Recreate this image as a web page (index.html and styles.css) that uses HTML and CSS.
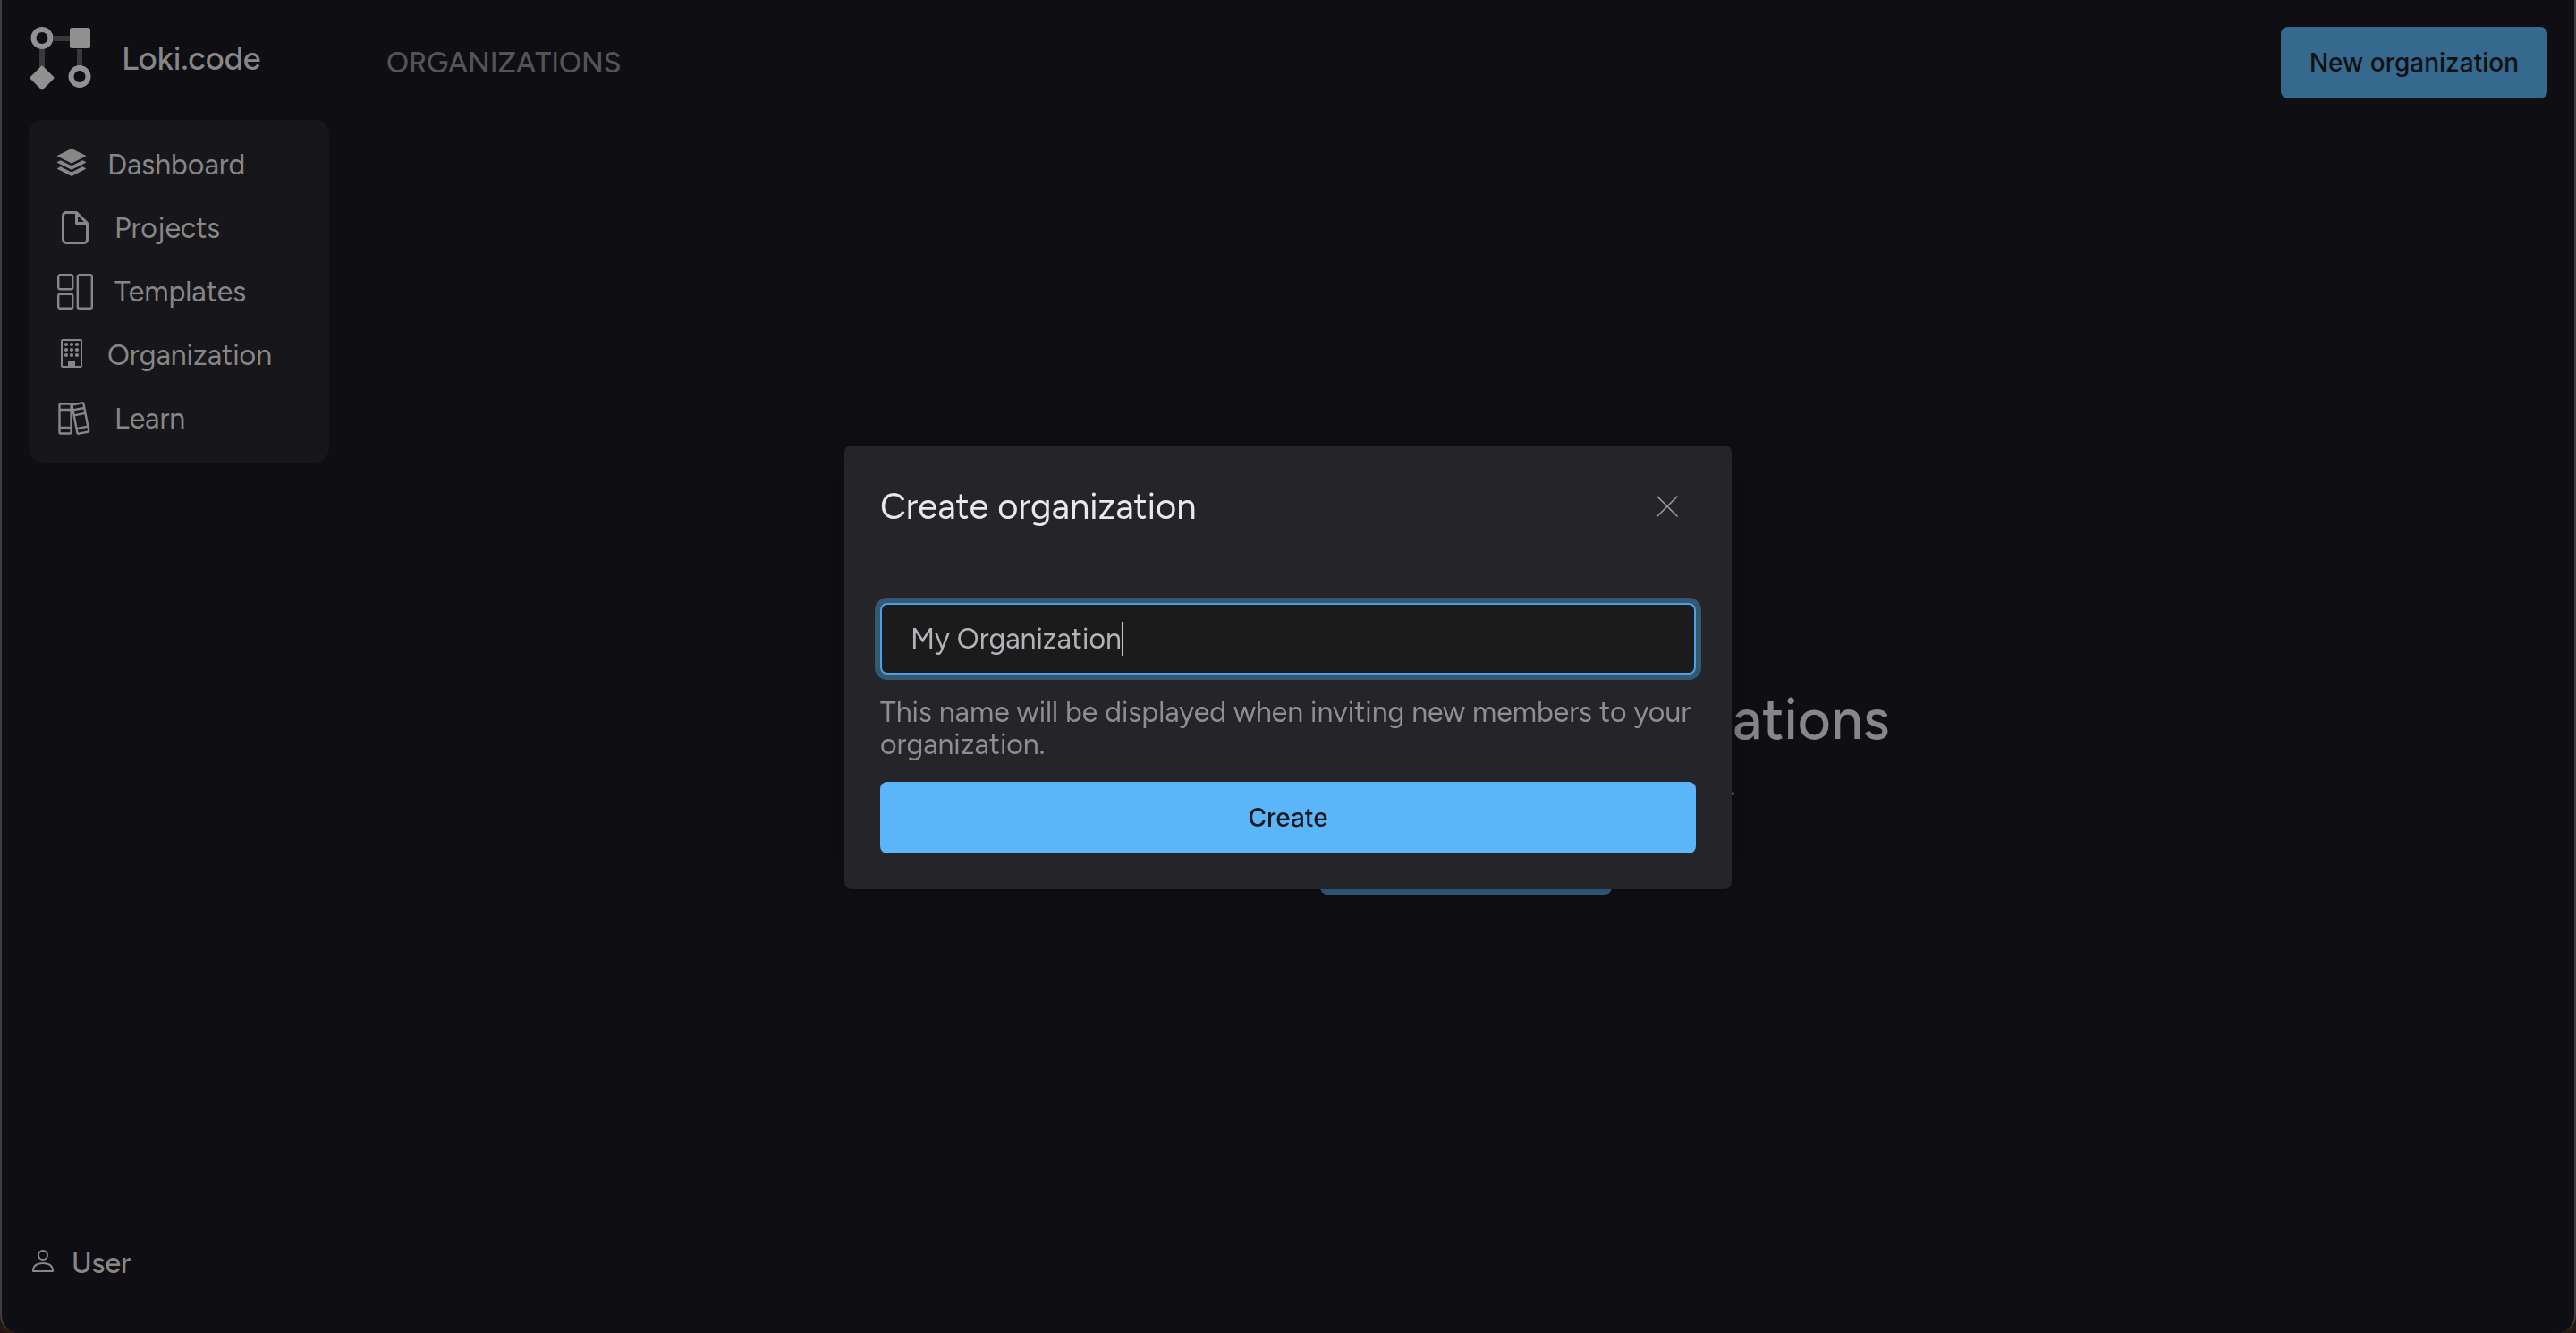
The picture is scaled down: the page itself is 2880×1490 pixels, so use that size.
FILE: index.html
```html
<!DOCTYPE html>
<html lang="en">
<head>
<meta charset="utf-8">
<meta name="viewport" content="width=device-width, initial-scale=1">
<title>Loki.code – Organizations</title>
<link rel="stylesheet" href="styles.css">
</head>
<body>
<div class="app">
  <aside class="sidebar">
    <a class="brand" href="#">
      <svg class="brand-logo" width="70" height="74" viewBox="0 0 70 74" aria-hidden="true">
        <path d="M15 25v20M28 13h20M57 25v20" fill="none" stroke="#39393b" stroke-width="6"/>
        <g fill="none" stroke="#919191" stroke-width="6"><circle cx="15" cy="12.500" r="9.500"/><circle cx="57" cy="55.500" r="9.500"/></g>
        <rect x="46" y="1" width="23" height="23" rx="2.500" fill="#919191"/>
        <path d="M15 45 27 57 15 69 3 57z" fill="#919191" stroke="#919191" stroke-width="3" stroke-linejoin="round"/>
      </svg>
      <span class="brand-name">Loki.code</span>
    </a>
    <nav class="menu">
      <a class="menu-item" href="#">
        <svg class="icon-small" width="32" height="32" viewBox="0 0 16 16" fill="currentColor" aria-hidden="true"><path d="m14.120 10.163 1.715.858c.22.110.220.424 0 .534L8.267 15.340a.6.6 0 0 1-.534 0L.165 11.555a.299.299 0 0 1 0-.534l1.716-.858 5.317 2.659c.505.252 1.100.252 1.604 0z"/><path d="m14.120 6.576 1.715.858c.22.110.220.424 0 .534l-7.568 3.784a.6.6 0 0 1-.534 0L.165 7.968a.299.299 0 0 1 0-.534l1.716-.858 5.317 2.659c.505.252 1.100.252 1.604 0z"/><path d="M7.733.063a.6.6 0 0 1 .534 0l7.568 3.784a.3.3 0 0 1 0 .535L8.267 8.165a.6.6 0 0 1-.534 0L.165 4.382a.299.299 0 0 1 0-.535z"/></svg>
        Dashboard
      </a>
      <a class="menu-item" href="#">
        <svg width="40" height="40" viewBox="0 0 40 40" fill="none" stroke="currentColor" stroke-width="3" stroke-linejoin="round" aria-hidden="true"><path d="M21.500 2.500H10a3.500 3.500 0 0 0-3.500 3.500v27a3.500 3.500 0 0 0 3.500 3.500h20a3.500 3.500 0 0 0 3.500-3.500V14.500zM21.500 2.500v12h12"/></svg>
        Projects
      </a>
      <a class="menu-item" href="#">
        <svg width="40" height="40" viewBox="0 0 40 40" fill="none" stroke="currentColor" stroke-width="2.400" aria-hidden="true"><rect x="1.200" y="1.200" width="16" height="16" rx="2"/><rect x="1.200" y="22.800" width="16" height="16" rx="2"/><rect x="22.800" y="1.200" width="16" height="37.600" rx="2"/></svg>
        Templates
      </a>
      <a class="menu-item" href="#">
        <svg class="icon-small" width="32" height="32" viewBox="0 0 32 32" aria-hidden="true"><rect x="5" y="1" width="22" height="30" rx="1" fill="none" stroke="currentColor" stroke-width="2"/><path d="M10 6h0M16 6h0M22 6h0M10 12h0M16 12h0M22 12h0M10 18h0M16 18h0M22 18h0" fill="none" stroke="currentColor" stroke-width="4.200" stroke-linecap="round"/><path d="M12 31v-6a1 1 0 0 1 1-1h6a1 1 0 0 1 1 1v6z" fill="currentColor"/></svg>
        Organization
      </a>
      <a class="menu-item" href="#">
        <svg width="40" height="40" viewBox="0 0 40 40" fill="none" stroke="currentColor" stroke-width="2.400" aria-hidden="true"><rect x="2.500" y="3.500" width="13" height="33" rx="1.500"/><path d="M2.500 10h13M2.500 30h13"/><g transform="rotate(-11 26 20)"><rect x="19.500" y="3" width="13" height="33" rx="1.500"/><path d="M19.500 9h13M19.500 15h13M19.500 30h13"/></g></svg>
        Learn
      </a>
    </nav>
    <a class="account" href="#">
      <svg class="icon-small" width="32" height="32" viewBox="0 0 32 32" fill="none" stroke="currentColor" stroke-width="2" stroke-linejoin="round" aria-hidden="true"><circle cx="16" cy="9" r="5"/><path d="M5 27h22c0-6-4-9-11-9S5 21 5 27z"/></svg>
      User
    </a>
  </aside>
  <main class="main">
    <header class="topbar">
      <h1 class="page-title">ORGANIZATIONS</h1>
      <button class="button button-dim" type="button">New organization</button>
    </header>
    <section class="empty">
      <h2 class="empty-title">You don't have any organizations</h2>
      <p class="empty-text">Get started by making a new organization.</p>
      <button class="button button-dim" type="button">Create organization</button>
    </section>
  </main>
</div>
<div class="overlay">
  <form class="modal" role="dialog" aria-labelledby="modal-title">
    <div class="modal-head">
      <h2 class="modal-title" id="modal-title">Create organization</h2>
      <button class="close" type="button" aria-label="Close">
        <svg width="24" height="24" viewBox="0 0 24 24" fill="none" stroke="currentColor" stroke-width="1.600" stroke-linecap="round" aria-hidden="true"><path d="M1 1l22 22M23 1 1 23"/></svg>
      </button>
    </div>
    <div class="field-wrap">
      <input class="field" id="org-name" type="text" value="My Organization" aria-label="Organization name" aria-describedby="org-help">
      <span class="caret" aria-hidden="true"></span>
    </div>
    <p class="help" id="org-help">This name will be displayed when inviting new members to your organization.</p>
    <button class="button button-primary" type="submit">Create</button>
  </form>
</div>
</body>
</html>
```
FILE: styles.css
```css
* {
  box-sizing: border-box;
}

html {
  background: #26170d;
}

body {
  margin: 0;
  font-family: Figtree, Lato, "Open Sans", sans-serif;
  font-size: 32px;
  line-height: 36px;
  color: #878787;
}

h1,
h2,
p {
  margin: 0;
  font-weight: 400;
}

a {
  color: inherit;
  text-decoration: none;
}

svg {
  display: block;
  flex: none;
}

.app {
  display: flex;
  min-height: 100vh;
  background: #0f0e13;
  border: solid #3e3e40;
  border-width: 0 2px;
  border-radius: 0 0 20px 20px;
}

.sidebar {
  display: flex;
  flex-direction: column;
  width: 398px;
  padding: 30px;
}

.brand {
  display: flex;
  gap: 34px;
  margin-bottom: 30px;
}

.brand-name {
  padding-top: 18px;
  font-size: 36px;
  font-weight: 500;
}

.menu {
  width: 336px;
  padding: 14px 32px;
  border-radius: 16px;
  background: #17161b;
}

.menu-item {
  display: flex;
  align-items: center;
  gap: 24px;
  height: 71px;
}

.icon-small {
  margin-bottom: 4px;
}

.account {
  display: flex;
  align-items: center;
  gap: 16px;
  margin-top: auto;
  padding-bottom: 30px;
  font-weight: 500;
}

.main {
  display: flex;
  flex: 1;
  flex-direction: column;
}

.topbar {
  display: flex;
  align-items: center;
  justify-content: space-between;
  padding: 30px 30px 30px 32px;
}

.page-title {
  font-size: 32px;
  font-weight: 500;
  color: #545456;
}

.button {
  padding: 22px 32px;
  border: 0;
  border-radius: 8px;
  font: 500 28px/36px Inter, sans-serif;
  color: #17181a;
}

.button-dim {
  background: #35698e;
  color: #0f1012;
}

.button-primary {
  background: #5bb5f9;
}

.empty {
  display: flex;
  flex: 1;
  flex-direction: column;
  align-items: center;
  justify-content: center;
  padding-top: 142px;
}

.empty-title {
  margin-bottom: 24px;
  font-size: 64px;
  line-height: 64px;
  font-weight: 500;
}

.empty-text {
  margin-bottom: 24px;
  color: #666668;
}

.overlay {
  position: fixed;
  inset: 0;
  display: flex;
  align-items: center;
  justify-content: center;
  padding-top: 2px;
}

.modal {
  display: flex;
  flex-direction: column;
  width: 992px;
  max-width: 100%;
  padding: 40px;
  border-radius: 8px;
  background: #252429;
  box-shadow: 0 4px 32px rgba(10, 10, 10, 0.4);
}

.modal-head {
  display: flex;
  align-items: center;
  justify-content: space-between;
  margin-bottom: 80px;
}

.modal-title {
  font-size: 40px;
  line-height: 56px;
  color: #e9e9e9;
}

.close {
  padding: 20px;
  margin: -8px 0;
  border: 0;
  background: none;
  color: #9c9ca0;
}

.field-wrap {
  position: relative;
  display: flex;
}

.field {
  width: 100%;
  padding: 20px 32px;
  border: 2px solid #4a9fe6;
  border-radius: 8px;
  outline: 0;
  background: #1b1b1c;
  box-shadow: 0 0 0 6px #355872;
  font: inherit;
  color: #b4b3b9;
}

/* text cursor at the end of the typed name */
.caret {
  position: absolute;
  top: 21px;
  left: 270px;
  width: 2px;
  height: 38px;
  background: #c8c7cc;
}

.help {
  margin: 24px 0;
  color: #8f8e94;
}
```
